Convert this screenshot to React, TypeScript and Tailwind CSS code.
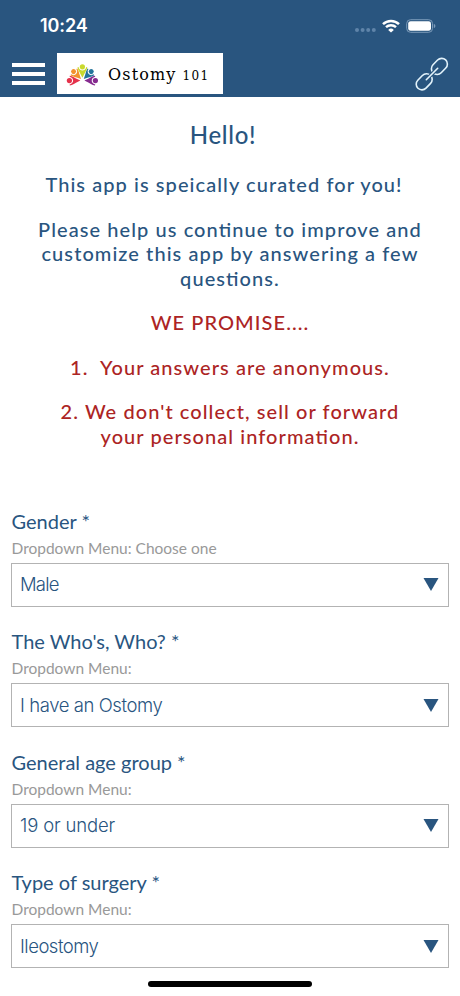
import { useState } from "react";

const fields = [
    { id: "gender", label: "Gender *", hint: "Dropdown Menu: Choose one", value: "Male", spacing: "tracking-[-0.8px]" },
    { id: "who", label: "The Who's, Who? *", hint: "Dropdown Menu:", value: "I have an Ostomy", spacing: "tracking-[-0.42px]" },
    { id: "age", label: "General age group *", hint: "Dropdown Menu:", value: "19 or under", spacing: "tracking-[-0.15px]" },
    { id: "surgery", label: "Type of surgery *", hint: "Dropdown Menu:", value: "Ileostomy", spacing: "tracking-[-0.5px]" },
];

// One figure of the logo: a round head between two raised arms
function Person({ color, transform }: { color: string; transform: string }) {
    return (
        <g transform={transform} fill={color}>
            <circle cx="0" cy="-13" r="2.6" />
            <path d="M-4.9 -12.6 L-3.9 -12.8 C-3.2 -10.2 -1.6 -9.3 0 -9.3 C1.6 -9.3 3.2 -10.2 3.9 -12.8 L4.9 -12.6 C4.6 -9.6 2.8 -8 2.2 -6.4 L0 -2 L-2.2 -6.4 C-2.8 -8 -4.6 -9.6 -4.9 -12.6 Z" />
        </g>
    );
}

function Logo() {
    return (
        <svg className="h-[24px] w-[34px] shrink-0" viewBox="0 0 34 24">
            <Person color="#e5324b" transform="translate(17.4 18.6) rotate(-90)" />
            <Person color="#862a8f" transform="translate(17.4 18.6) rotate(90)" />
            <Person color="#f2922c" transform="translate(17.4 18.4) rotate(-45) scale(0.96)" />
            <Person color="#25749b" transform="translate(17.4 18.4) rotate(45) scale(0.96)" />
            <Person color="#c9d92d" transform="translate(17.4 17.8)" />
        </svg>
    );
}

function StatusBar() {
    return (
        <div className="flex h-[51px] items-center justify-between pl-10 pr-[24px]">
            <span className="font-[Inter,sans-serif] text-[18px] font-semibold leading-6 tracking-[-0.1px]">10:24</span>
            <div className="flex items-center">
                <svg className="mr-[6px] mt-[9px] h-[4px] w-[21px]" viewBox="0 0 21 4" fill="#5f84a9">
                    <circle cx="2" cy="2" r="2" />
                    <circle cx="7.6" cy="2" r="2" />
                    <circle cx="13.2" cy="2" r="2" />
                    <circle cx="18.8" cy="2" r="2" />
                </svg>
                <svg className="mr-[6px] h-[14px] w-[18px]" viewBox="0 0 18 14" fill="none" stroke="white">
                    <path d="M1 5.2 A11.5 11.5 0 0 1 17 5.2" strokeWidth="2.5" />
                    <path d="M4 8.2 A7.2 7.2 0 0 1 14 8.2" strokeWidth="2.4" />
                    <path d="M9 13.6 L6.2 10.9 A4 4 0 0 1 11.8 10.9 Z" fill="white" stroke="none" />
                </svg>
                <svg className="h-[14px] w-[30px]" viewBox="0 0 30 14">
                    <rect x="0.7" y="0.7" width="25.8" height="12.6" rx="3.8" fill="none" stroke="#7b9ab9" strokeWidth="1" />
                    <rect x="2.2" y="2.2" width="22.8" height="9.6" rx="2.4" fill="white" />
                    <path d="M27.8 4.8 C30 5.8 30 8.2 27.8 9.2 Z" fill="#7b9ab9" />
                </svg>
            </div>
        </div>
    );
}

function Header() {
    return (
        <header className="h-[97px] bg-[#29557f] text-white">
            <StatusBar />
            <div className="flex h-[45px] items-center pl-3 pr-[11px]">
                <button type="button" aria-label="Menu" className="mr-3 mt-px flex w-[33px] flex-col gap-[5px]">
                    <span className="h-1 bg-white" />
                    <span className="h-1 bg-white" />
                    <span className="h-1 bg-white" />
                </button>
                <div className="flex h-[41px] w-[166px] items-center bg-white pl-2">
                    <Logo />
                    <span className="ml-[9px] flex items-baseline whitespace-pre pt-[3px] font-['DejaVu_Serif',serif] text-[16px] tracking-[1.15px] text-black">
                        Ostomy<span className="ml-[6px] text-[12px] tracking-[1.3px]">101</span>
                    </span>
                </div>
                <svg className="ml-auto h-[34px] w-[34px]" viewBox="0 0 34 34" fill="none" stroke="#e3f3fb" strokeWidth="1.6" strokeLinecap="round">
                    <rect x="-9" y="-5.7" width="18" height="11.4" rx="5.7" transform="translate(24.4 9.4) rotate(-46)" />
                    <rect x="-9" y="-5.7" width="18" height="11.4" rx="5.7" transform="translate(9.2 24.8) rotate(-46)" />
                    <path d="M13.5 20.5 L20.5 13.5" stroke="#29557f" strokeWidth="3.8" strokeLinecap="butt" />
                    <path d="M11.3 22.7 L22.7 11.3" />
                </svg>
            </div>
        </header>
    );
}

function Field({ id, label, hint, value, spacing }: (typeof fields)[number]) {
    const [open, setOpen] = useState(false);

    return (
        <div className="h-[120.5px]">
            <label htmlFor={id} className="block pl-[0.5px] text-[20px] leading-[26px] text-[#29557f]">{label}</label>
            <p className="mt-[2px] h-[27px] pl-[0.5px] text-[15.5px] leading-6 text-[#999]">{hint}</p>
            <button
                type="button"
                id={id}
                aria-expanded={open}
                onClick={() => setOpen(!open)}
                className="flex h-[44px] w-full items-center justify-between border border-[#b3b3b3] pl-2 pr-[9px]"
            >
                <span className={`pt-px font-[Inter,sans-serif] text-[18.5px] font-light text-[#29557f] ${spacing}`}>{value}</span>
                <svg className="h-[13px] w-[16px]" viewBox="0 0 16 13">
                    <path d="M0.5 0 H15.5 L8 13 Z" fill="#29557f" />
                </svg>
            </button>
        </div>
    );
}

export default function App() {
    return (
        <div className="relative flex h-[996px] w-[460px] flex-col overflow-hidden bg-white font-[Lato,sans-serif]">
            <Header />

            <section className="flex flex-col gap-5 pt-[26px] text-center text-[20px] font-medium leading-[24.5px] tracking-[1.07px] text-[#29557f] [font-feature-settings:'liga']">
                <h1 className="-ml-[14px] pb-[4.5px] text-[24px] tracking-[0.7px]">Hello!</h1>
                <p className="-ml-[12px]">This app is speically curated for you!</p>
                <p>
                    Please help us continue to improve and
                    <br />
                    customize this app by answering a few
                    <br />
                    questions.
                </p>
                <p className="text-[#ac2424]">WE PROMISE....</p>
                <p className="whitespace-pre text-[#ac2424]">1.  Your answers are anonymous.</p>
                <p className="text-[#ac2424]">
                    2. We don't collect, sell or forward
                    <br />
                    your personal information.
                </p>
            </section>

            <form className="mt-[59.5px] px-[11px]">
                {fields.map((field) => (
                    <Field key={field.id} {...field} />
                ))}
            </form>

            {/* Home indicator */}
            <div className="absolute bottom-[9px] left-[148px] h-[6px] w-[164px] rounded-full bg-black" />
        </div>
    );
}
